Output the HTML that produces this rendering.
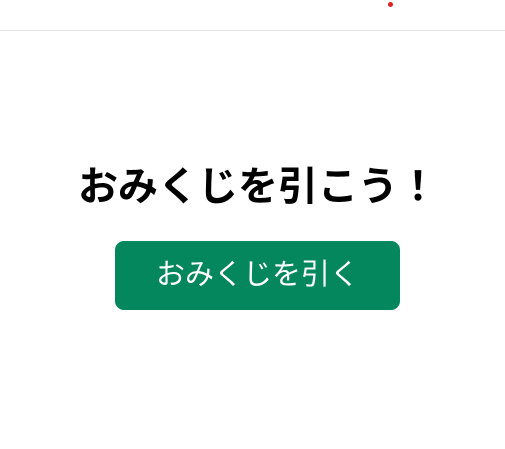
<!DOCTYPE html>
<html><head><meta charset="utf-8"><style>
html,body{margin:0;padding:0;width:505px;height:449px;background:#fff;overflow:hidden;font-family:"Liberation Sans","Noto Sans CJK JP",sans-serif;}
.hdr{position:absolute;left:0;top:0;width:505px;height:30px;border-bottom:1px solid #e3e3e3;}
.dot{position:absolute;left:388px;top:2px;width:5px;height:5px;border-radius:50%;background:#e02020;}
h1{position:absolute;left:78px;top:162px;margin:0;font-size:40px;line-height:50px;font-weight:bold;color:#000;white-space:nowrap;}
.btn{position:absolute;left:115px;top:241px;width:285px;height:69px;border-radius:9px;background:#05875e;color:#fff;font-size:29px;line-height:69px;text-align:center;}
</style></head><body>
<div class="hdr"></div><div class="dot"></div>
<h1>おみくじを引こう！</h1>
<div class="btn">おみくじを引く</div>
</body></html>
